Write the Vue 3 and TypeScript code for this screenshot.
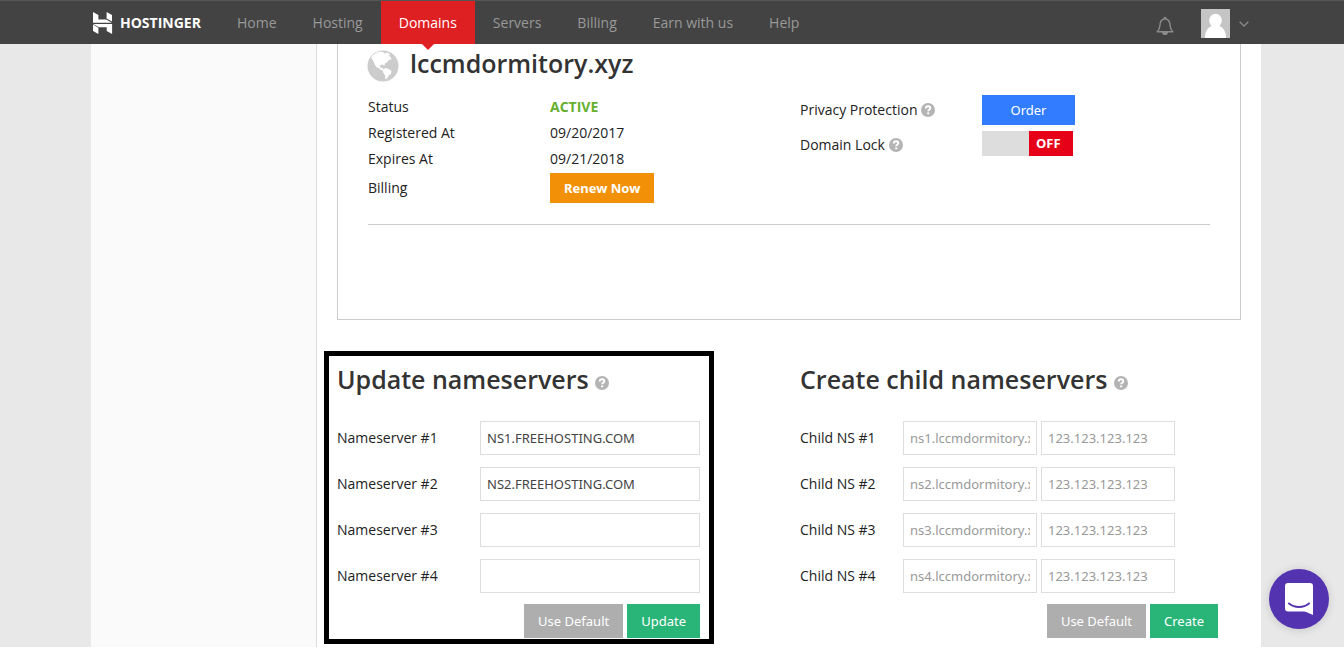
<script setup lang="ts">
import { ref, reactive } from 'vue'

interface NavItem {
  label: string
  active?: boolean
}

const nav: NavItem[] = [
  { label: 'Home' },
  { label: 'Hosting' },
  { label: 'Domains', active: true },
  { label: 'Servers' },
  { label: 'Billing' },
  { label: 'Earn with us' },
  { label: 'Help' },
]

const details = [
  { label: 'Status', value: 'ACTIVE', active: true },
  { label: 'Registered At', value: '09/20/2017', active: false },
  { label: 'Expires At', value: '09/21/2018', active: false },
]

const domain = 'lccmdormitory.xyz'
const locked = ref<boolean>(false)
const nameservers = reactive<string[]>(['NS1.FREEHOSTING.COM', 'NS2.FREEHOSTING.COM', '', ''])
const children = reactive(
  [1, 2, 3, 4].map((n) => ({ n, host: '', ip: '', placeholder: `ns${n}.${domain}` })),
)

function useDefaultNameservers(): void {
  nameservers.forEach((_, i) => (nameservers[i] = ''))
}

function clearChildren(): void {
  children.forEach((c) => {
    c.host = ''
    c.ip = ''
  })
}
</script>

<template>
  <div class="page">
    <svg class="defs" aria-hidden="true">
      <symbol id="help" viewBox="0 0 14 14">
        <circle cx="7" cy="7" r="7" fill="#b4b4b4" />
        <path d="M4.7 5.5C4.8 4 5.8 3.3 7 3.3c1.3 0 2.3.8 2.3 1.9 0 1.5-2.1 1.6-2.1 3.1" fill="none" stroke="#fff" stroke-width="1.9" />
        <rect x="6.2" y="9.4" width="2" height="1.9" fill="#fff" />
      </symbol>
    </svg>

    <header class="topbar">
      <div class="container bar">
        <a href="#" class="logo">
          <svg viewBox="0 0 20 22" width="20" height="22" fill="#fff" aria-hidden="true">
            <path d="M0 0l5.4 3v4.6h7.8l5.6 3.2H0z" />
            <path d="M13.6 0L19 3v6.6l-5.4-3.1z" />
            <path d="M.2 12.1h18.9V22l-5.4-3v-3.7H5.9z" />
            <path d="M0 12.6l5.4 3.1V22L0 19z" />
          </svg>
          <span>HOSTINGER</span>
        </a>
        <nav class="nav">
          <a v-for="item in nav" :key="item.label" href="#" :class="{ active: item.active }">{{ item.label }}</a>
        </nav>
        <div class="tools">
          <button type="button" class="icon-btn bell" aria-label="Notifications">
            <svg viewBox="0 0 18 20" width="18" height="20" fill="none" stroke="#8a8a8a" stroke-width="1.5">
              <path d="M1.2 15.8c2-1.8 2.5-3.2 2.7-6.3C4.1 5.2 5.8 3 9 3s4.9 2.2 5.1 6.5c.2 3.1.7 4.5 2.7 6.3z" stroke-linejoin="round" />
              <path d="M8 2.7c0-1.6 2-1.6 2 0" />
              <path d="M6.8 16.4c.3 2.6 4.1 2.6 4.4 0z" fill="#8a8a8a" />
            </svg>
          </button>
          <button type="button" class="icon-btn user" aria-label="Account menu">
            <svg viewBox="0 0 29 29" width="29" height="29">
              <rect width="29" height="29" fill="#c5c5c5" />
              <ellipse cx="14.5" cy="11.5" rx="6.3" ry="6.8" fill="#fff" />
              <path d="M4 29c0-7.5 3.5-11 7-12h7c3.5 1 7 4.5 7 12z" fill="#fff" />
            </svg>
            <svg viewBox="0 0 10 6" width="10" height="6" fill="none" stroke="#8a8a8a" stroke-width="1.3">
              <path d="M.7.7L5 5 9.3.7" />
            </svg>
          </button>
        </div>
      </div>
    </header>

    <div class="container body">
      <aside class="sidebar"></aside>
      <main class="main">
        <section class="card">
          <h1>
            <svg viewBox="0 0 32 32" width="32" height="32" aria-hidden="true">
              <circle cx="16" cy="16" r="15.5" fill="#ccc" />
              <path d="M4 7.5C6.5 4 10 2 14 1.6l2.500.6 1 1.300 2.500-.9 3 1.400-1 2 1.800 1.200.7 2.300-2.500.2-1.500 2.300-2.500 1.500-.8 2.500-1.200-1.500-2.500.5-.7 1.700 1.200 1.300 1.500-.3.5 1.800 1.500.8-.5.800-2.500-.8-2.200-1.800-3-1.500L7.500 14 6 10.500z" fill="#fff" />
              <path d="M16.500 18.700l2.500-.7 3 1.200 2.500 1.800-.5 3-2.200 1.500-1.800 3-1.500.8-.5-4-2-3z" fill="#fff" />
            </svg>
            <span>{{ domain }}</span>
          </h1>
          <div class="columns">
            <dl class="facts">
              <div v-for="d in details" :key="d.label" class="fact">
                <dt>{{ d.label }}</dt>
                <dd :class="{ ok: d.active }">{{ d.value }}</dd>
              </div>
              <div class="fact tall">
                <dt>Billing</dt>
                <dd><button type="button" class="btn renew">Renew Now</button></dd>
              </div>
            </dl>
            <dl class="facts">
              <div class="fact tall">
                <dt>Privacy Protection <svg class="help"><use href="#help" /></svg></dt>
                <dd><button type="button" class="btn order">Order</button></dd>
              </div>
              <div class="fact lock">
                <dt><label for="lock">Domain Lock</label> <svg class="help"><use href="#help" /></svg></dt>
                <dd>
                  <label class="toggle" :class="{ on: locked }">
                    <input id="lock" v-model="locked" type="checkbox" />
                    <span>{{ locked ? 'ON' : 'OFF' }}</span>
                  </label>
                </dd>
              </div>
            </dl>
          </div>
          <hr />
        </section>

        <div class="forms">
          <form class="form update" @submit.prevent>
            <h2>Update nameservers <svg class="help"><use href="#help" /></svg></h2>
            <div v-for="(_, i) in nameservers" :key="i" class="row">
              <label :for="`ns${i}`">Nameserver #{{ i + 1 }}</label>
              <input :id="`ns${i}`" v-model="nameservers[i]" type="text" />
            </div>
            <div class="actions">
              <button type="button" class="btn grey" @click="useDefaultNameservers">Use Default</button>
              <button type="submit" class="btn green">Update</button>
            </div>
          </form>

          <form class="form create" @submit.prevent>
            <h2>Create child nameservers <svg class="help"><use href="#help" /></svg></h2>
            <div v-for="c in children" :key="c.n" class="row">
              <label :for="`child${c.n}`">Child NS #{{ c.n }}</label>
              <input :id="`child${c.n}`" v-model="c.host" type="text" :placeholder="c.placeholder" />
              <input v-model="c.ip" type="text" :aria-label="`Child NS #${c.n} IP address`" placeholder="123.123.123.123" />
            </div>
            <div class="actions">
              <button type="button" class="btn grey" @click="clearChildren">Use Default</button>
              <button type="submit" class="btn green">Create</button>
            </div>
          </form>
        </div>
      </main>
    </div>

    <button type="button" class="chat" aria-label="Open chat">
      <svg viewBox="0 0 28 32" width="28" height="32">
        <path d="M3 0h22a3 3 0 0 1 3 3v29c-3-1.5-6-3-9-3.5H3a3 3 0 0 1-3-3V3a3 3 0 0 1 3-3z" fill="#fff" />
        <path d="M4 20.5c5.5 4.6 14.5 4.6 20 0" fill="none" stroke="#5433b0" stroke-width="2" stroke-linecap="round" />
      </svg>
    </button>
  </div>
</template>

<style>
body {
  margin: 0;
  background: #fff;
}
</style>

<style scoped>
* {
  box-sizing: border-box;
}
.page {
  min-height: calc(100vh - 1px);
  display: flex;
  flex-direction: column;
  background: #e8e8e8;
  color: #222;
  font: 14px/20px 'Open Sans', 'Noto Sans', sans-serif;
}
.defs {
  position: absolute;
  width: 0;
  height: 0;
}
.container {
  width: calc(100% - 8px);
  max-width: 1170px;
  margin: 0 auto;
  position: relative;
  left: 4px;
}
.topbar {
  position: sticky;
  top: 0;
  z-index: 2;
  background: #434343;
  border-top: 1px solid #555;
}
.bar {
  display: flex;
  height: 43px;
}
.logo {
  display: flex;
  align-items: center;
  gap: 7px;
  width: 128px;
  padding-left: 2px;
  color: #fff;
  font: 700 14px/20px 'Open Sans', sans-serif;
  text-decoration: none;
}
.nav {
  display: flex;
}
.nav a {
  position: relative;
  padding: 12px 18px;
  color: #999;
  text-decoration: none;
}
.nav a.active {
  background: #df2023;
  color: #fff;
}
.nav a.active::after {
  content: '';
  position: absolute;
  top: 100%;
  left: 50%;
  margin-left: -6px;
  border: 6px solid transparent;
  border-top-color: #df2023;
  border-bottom: 0;
}
.tools {
  display: flex;
  align-items: center;
  gap: 27px;
  margin-left: auto;
  padding-right: 12px;
}
.icon-btn {
  display: flex;
  align-items: center;
  gap: 9px;
  padding: 0;
  border: 0;
  background: none;
}
.bell {
  padding-top: 6px;
}
.user {
  padding-top: 2px;
}
.body {
  flex: 1;
  display: flex;
  background: #fff;
}
.sidebar {
  flex: 0 0 226px;
  background: #fafafa;
  border-right: 1px solid #ddd;
}
.main {
  flex: 1;
  min-width: 0;
  padding: 0 20px;
}
.card {
  padding: 0 30px 94px;
  border: 1px solid #ccc;
  border-top: 0;
}
h1,
h2 {
  margin: 0;
  color: #333;
  font-size: 25px;
  font-weight: 650;
  line-height: 40px;
}
h1 {
  display: flex;
  align-items: center;
  gap: 11px;
  height: 50px;
  padding-bottom: 6px;
}
h1 svg {
  margin-left: -1px;
}
h1 span {
  padding-bottom: 6px;
}
.columns {
  display: grid;
  grid-template-columns: 432px 1fr;
}
.facts {
  margin: 0;
}
.fact {
  display: flex;
  align-items: center;
  min-height: 26px;
}
.fact.tall {
  min-height: 32px;
}
.fact.lock {
  align-items: flex-start;
}
.lock dt {
  padding-top: 9px;
}
.lock dd {
  padding-top: 5px;
}
dt {
  width: 182px;
}
dd {
  margin: 0;
}
.ok {
  color: #66b02e;
  font-weight: 700;
}
.help {
  width: 14px;
  height: 14px;
  vertical-align: -2px;
}
h2 .help {
  vertical-align: -1px;
}
hr {
  margin: 20px 0 0;
  border: 0;
  border-top: 1px solid #ccc;
}
.btn {
  height: 34px;
  padding: 0 14px;
  border: 0;
  color: #fff;
  font: 13px/20px 'Noto Sans', sans-serif;
  white-space: nowrap;
}
.renew {
  height: 30px;
  background: #f29108;
  font-weight: 700;
}
.order {
  width: 93px;
  height: 30px;
  background: #327dff;
}
.grey {
  background: #aeaeae;
}
.green {
  background: #29b577;
}
.toggle {
  display: flex;
  width: 91px;
  padding-left: 47px;
  background: #ddd;
}
.toggle.on {
  padding: 0 47px 0 0;
}
.toggle input {
  position: absolute;
  opacity: 0;
}
.toggle span {
  flex: 1;
  padding: 3px 0 3px 7px;
  background: #e60018;
  color: #fff;
  font: 700 13px/19px 'Open Sans', sans-serif;
}
.toggle.on span {
  background: #29b577;
}
.forms {
  display: grid;
  grid-template-columns: 377px 418px;
  gap: 86px;
  padding-top: 31px;
}
.form {
  position: relative;
}
.update::before {
  content: '';
  position: absolute;
  inset: 0 0 -6px -13px;
  border: 5px solid #000;
  pointer-events: none;
}
.update {
  padding-right: 14px;
}
h2 {
  padding: 8px 0 22px;
}
.row {
  display: flex;
  gap: 4px;
  align-items: center;
  margin-bottom: 12px;
}
.row label {
  flex: 0 0 139px;
}
.create .row label {
  flex-basis: 99px;
}
.row input {
  width: 220px;
  height: 34px;
  padding: 0 6px;
  border: 1px solid #ddd;
  background: #fff;
  color: #444;
  font: 13px/20px 'Noto Sans', sans-serif;
}
.create .row input {
  width: 134px;
}
.row input::placeholder {
  color: #999;
}
.actions {
  display: flex;
  justify-content: flex-end;
  gap: 4px;
  margin-top: -1px;
}
.chat {
  position: fixed;
  right: 15px;
  bottom: 19px;
  display: flex;
  align-items: center;
  justify-content: center;
  width: 60px;
  height: 60px;
  padding: 0;
  border: 0;
  border-radius: 50%;
  background: #5433b0;
  box-shadow: 0 1px 8px rgba(0, 0, 0, 0.15);
}
</style>
